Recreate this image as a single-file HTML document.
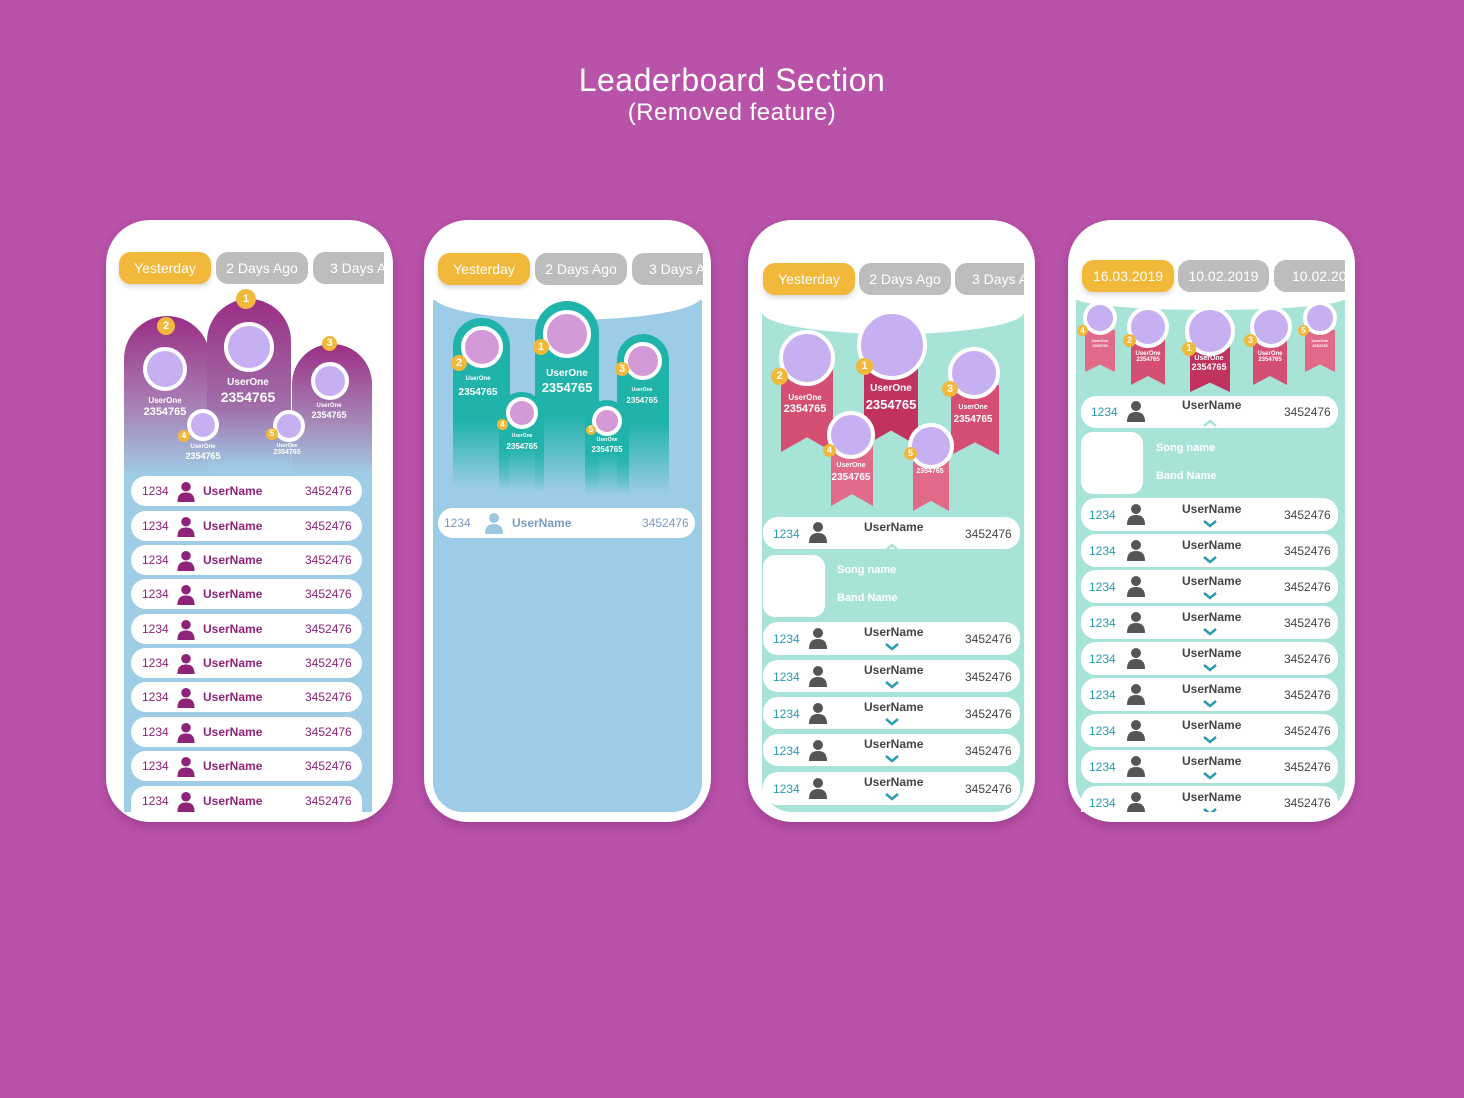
<!DOCTYPE html>
<html><head><meta charset="utf-8"><style>
*{margin:0;padding:0;box-sizing:border-box}
body{width:1464px;height:1098px;background:#B952A9;position:relative;overflow:hidden;font-family:"Liberation Sans Narrow","Liberation Sans",sans-serif}
.a{position:absolute}
.ph{position:absolute;background:#fff;border-radius:44px;width:287px;height:602px;top:220px;box-shadow:0 4px 10px rgba(80,0,70,.25)}
.tab{position:absolute;height:32px;border-radius:12px;color:#fff;font-size:14px;line-height:32px;text-align:center;overflow:hidden;white-space:nowrap}
.y{background:#F1B83A;box-shadow:0 3px 5px rgba(0,0,0,.15)}.g{background:#BDBDBD}
.row{position:absolute;background:#fff;border-radius:15px;height:30px;font-size:12px}
.row span{position:absolute;top:8px}
.c{position:absolute;border-radius:50%;background:#C7B0F2;border:4px solid #fff}
.cp{background:#D49AD8}
.b{position:absolute;border-radius:50%;background:#F1B83A;color:#fff;font-size:11px;font-weight:bold;text-align:center}
.t{position:absolute;color:#fff;text-align:center;font-weight:bold}
.rib{position:absolute;background:#D44F72;clip-path:polygon(0 0,100% 0,100% 100%,50% 82%,0 100%)}
</style></head><body>
<div class="a" style="left:0;width:1464px;top:62px;text-align:center;color:#fff;font-size:32px;letter-spacing:0.5px">Leaderboard Section</div>
<div class="a" style="left:0;width:1464px;top:99px;text-align:center;color:#fff;font-size:24px;letter-spacing:0.5px">(Removed feature)</div>

<!-- PHONE 1 -->
<div class="ph" style="left:106px"></div>
<div class="a" style="left:124px;top:420px;width:248px;height:392px;background:#9FCDE6"></div>
<div class="a" style="left:124px;top:316px;width:86px;height:160px;background:linear-gradient(#9b2d84,#a880b5 90px,#9fcde6);border-radius:43px 43px 0 0"></div>
<div class="a" style="left:207px;top:299px;width:84px;height:170px;background:linear-gradient(#9b2d84,#a070aa 110px,#9fcde6);border-radius:42px 42px 0 0"></div>
<div class="a" style="left:292px;top:344px;width:80px;height:130px;background:linear-gradient(#9b2d84,#a68ab9 80px,#9fcde6);border-radius:40px 40px 0 0"></div>
<div class="c" style="left:143px;top:347px;width:44px;height:44px"></div>
<div class="c" style="left:224px;top:322px;width:50px;height:50px"></div>
<div class="c" style="left:311px;top:362px;width:38px;height:38px"></div>
<div class="c" style="left:187px;top:409px;width:32px;height:32px"></div>
<div class="c" style="left:273px;top:410px;width:32px;height:32px"></div>
<div class="b" style="left:157px;top:317px;width:18px;height:18px;line-height:18px">2</div>
<div class="b" style="left:236px;top:289px;width:20px;height:20px;line-height:20px">1</div>
<div class="b" style="left:322px;top:336px;width:15px;height:15px;line-height:15px">3</div>
<div class="b" style="left:178px;top:430px;width:12px;height:12px;line-height:12px;font-size:8px">4</div>
<div class="b" style="left:266px;top:428px;width:12px;height:12px;line-height:12px;font-size:8px">5</div>
<div class="t" style="left:130px;top:396px;width:70px;font-size:8px">UserOne</div><div class="t" style="left:130px;top:406px;width:70px;font-size:11px">2354765</div>
<div class="t" style="left:212px;top:377px;width:72px;font-size:10px">UserOne</div><div class="t" style="left:212px;top:389px;width:72px;font-size:14px">2354765</div>
<div class="t" style="left:296px;top:403px;width:66px;font-size:6px">UserOne</div><div class="t" style="left:296px;top:410px;width:66px;font-size:9px">2354765</div>
<div class="t" style="left:170px;top:444px;width:66px;font-size:6px">UserOne</div><div class="t" style="left:170px;top:451px;width:66px;font-size:9px">2354765</div>
<div class="t" style="left:254px;top:443px;width:66px;font-size:5px">UserOne</div><div class="t" style="left:254px;top:449px;width:66px;font-size:7px">2354765</div>

<div class="tab y" style="left:119px;top:252px;width:92px">Yesterday</div>
<div class="tab g" style="left:216px;top:252px;width:92px">2 Days Ago</div>
<div class="tab g" style="left:313px;top:252px;width:71px;border-radius:12px 0 0 12px;text-align:left;padding-left:17px">3 Days Ago</div>

<div style="color:#8E2379">
<div class="row" style="left:131px;top:476px;width:231px"><span style="left:11px">1234</span><svg class="a" style="left:45px;top:5px" width="20" height="21" viewBox="0 0 20 22" fill="#8E2379"><circle cx="10" cy="6" r="5"/><path d="M1 22C1 14 5 12 10 12S19 14 19 22Z"/></svg><span style="left:72px;font-weight:bold">UserName</span><span style="left:174px">3452476</span></div>
<div class="row" style="left:131px;top:511px;width:231px"><span style="left:11px">1234</span><svg class="a" style="left:45px;top:5px" width="20" height="21" viewBox="0 0 20 22" fill="#8E2379"><circle cx="10" cy="6" r="5"/><path d="M1 22C1 14 5 12 10 12S19 14 19 22Z"/></svg><span style="left:72px;font-weight:bold">UserName</span><span style="left:174px">3452476</span></div>
<div class="row" style="left:131px;top:545px;width:231px"><span style="left:11px">1234</span><svg class="a" style="left:45px;top:5px" width="20" height="21" viewBox="0 0 20 22" fill="#8E2379"><circle cx="10" cy="6" r="5"/><path d="M1 22C1 14 5 12 10 12S19 14 19 22Z"/></svg><span style="left:72px;font-weight:bold">UserName</span><span style="left:174px">3452476</span></div>
<div class="row" style="left:131px;top:579px;width:231px"><span style="left:11px">1234</span><svg class="a" style="left:45px;top:5px" width="20" height="21" viewBox="0 0 20 22" fill="#8E2379"><circle cx="10" cy="6" r="5"/><path d="M1 22C1 14 5 12 10 12S19 14 19 22Z"/></svg><span style="left:72px;font-weight:bold">UserName</span><span style="left:174px">3452476</span></div>
<div class="row" style="left:131px;top:614px;width:231px"><span style="left:11px">1234</span><svg class="a" style="left:45px;top:5px" width="20" height="21" viewBox="0 0 20 22" fill="#8E2379"><circle cx="10" cy="6" r="5"/><path d="M1 22C1 14 5 12 10 12S19 14 19 22Z"/></svg><span style="left:72px;font-weight:bold">UserName</span><span style="left:174px">3452476</span></div>
<div class="row" style="left:131px;top:648px;width:231px"><span style="left:11px">1234</span><svg class="a" style="left:45px;top:5px" width="20" height="21" viewBox="0 0 20 22" fill="#8E2379"><circle cx="10" cy="6" r="5"/><path d="M1 22C1 14 5 12 10 12S19 14 19 22Z"/></svg><span style="left:72px;font-weight:bold">UserName</span><span style="left:174px">3452476</span></div>
<div class="row" style="left:131px;top:682px;width:231px"><span style="left:11px">1234</span><svg class="a" style="left:45px;top:5px" width="20" height="21" viewBox="0 0 20 22" fill="#8E2379"><circle cx="10" cy="6" r="5"/><path d="M1 22C1 14 5 12 10 12S19 14 19 22Z"/></svg><span style="left:72px;font-weight:bold">UserName</span><span style="left:174px">3452476</span></div>
<div class="row" style="left:131px;top:717px;width:231px"><span style="left:11px">1234</span><svg class="a" style="left:45px;top:5px" width="20" height="21" viewBox="0 0 20 22" fill="#8E2379"><circle cx="10" cy="6" r="5"/><path d="M1 22C1 14 5 12 10 12S19 14 19 22Z"/></svg><span style="left:72px;font-weight:bold">UserName</span><span style="left:174px">3452476</span></div>
<div class="row" style="left:131px;top:751px;width:231px"><span style="left:11px">1234</span><svg class="a" style="left:45px;top:5px" width="20" height="21" viewBox="0 0 20 22" fill="#8E2379"><circle cx="10" cy="6" r="5"/><path d="M1 22C1 14 5 12 10 12S19 14 19 22Z"/></svg><span style="left:72px;font-weight:bold">UserName</span><span style="left:174px">3452476</span></div>
<div class="row" style="left:131px;top:786px;width:231px;height:26px;border-radius:15px 15px 0 0"><span style="left:11px">1234</span><svg class="a" style="left:45px;top:5px" width="20" height="21" viewBox="0 0 20 22" fill="#8E2379"><circle cx="10" cy="6" r="5"/><path d="M1 22C1 14 5 12 10 12S19 14 19 22Z"/></svg><span style="left:72px;font-weight:bold">UserName</span><span style="left:174px">3452476</span></div>
</div>

<!-- PHONE 2 -->
<div class="ph" style="left:424px"></div>
<div class="a" style="left:433px;top:300px;width:269px;height:512px;background:#9CCCE6;border-radius:0 0 30px 30px"></div>
<div class="a" style="left:433px;top:284px;width:269px;height:36px;background:#fff;border-radius:0 0 50% 50%/0 0 24px 24px"></div>
<div class="a" style="left:453px;top:318px;width:57px;height:170px;border-radius:28px 28px 0 0;background:linear-gradient(#1FB3AA 60%,rgba(156,204,230,0))"></div>
<div class="a" style="left:535px;top:301px;width:64px;height:190px;border-radius:32px 32px 0 0;background:linear-gradient(#1FB3AA 60%,rgba(156,204,230,0))"></div>
<div class="a" style="left:617px;top:334px;width:52px;height:160px;border-radius:26px 26px 0 0;background:linear-gradient(#1FB3AA 55%,rgba(156,204,230,0))"></div>
<div class="a" style="left:499px;top:392px;width:45px;height:100px;border-radius:22px 22px 0 0;background:linear-gradient(#1FB3AA 55%,rgba(156,204,230,0))"></div>
<div class="a" style="left:585px;top:400px;width:44px;height:95px;border-radius:22px 22px 0 0;background:linear-gradient(#1FB3AA 55%,rgba(156,204,230,0))"></div>
<div class="c cp" style="left:461px;top:326px;width:42px;height:42px"></div>
<div class="c cp" style="left:543px;top:310px;width:48px;height:48px"></div>
<div class="c cp" style="left:624px;top:342px;width:38px;height:38px"></div>
<div class="c cp" style="left:506px;top:397px;width:32px;height:32px"></div>
<div class="c cp" style="left:592px;top:406px;width:30px;height:30px"></div>
<div class="b" style="left:451px;top:355px;width:16px;height:16px;line-height:16px">2</div>
<div class="b" style="left:533px;top:339px;width:16px;height:16px;line-height:16px">1</div>
<div class="b" style="left:615px;top:362px;width:14px;height:14px;line-height:14px">3</div>
<div class="b" style="left:497px;top:419px;width:11px;height:11px;line-height:11px;font-size:8px">4</div>
<div class="b" style="left:586px;top:425px;width:10px;height:10px;line-height:10px;font-size:8px">5</div>
<div class="t" style="left:446px;top:376px;width:64px;font-size:6px">UserOne</div><div class="t" style="left:446px;top:387px;width:64px;font-size:10px">2354765</div>
<div class="t" style="left:532px;top:368px;width:70px;font-size:10px">UserOne</div><div class="t" style="left:532px;top:380px;width:70px;font-size:13px">2354765</div>
<div class="t" style="left:610px;top:387px;width:64px;font-size:5px">UserOne</div><div class="t" style="left:610px;top:396px;width:64px;font-size:8px">2354765</div>
<div class="t" style="left:490px;top:433px;width:64px;font-size:5px">UserOne</div><div class="t" style="left:490px;top:442px;width:64px;font-size:8px">2354765</div>
<div class="t" style="left:575px;top:437px;width:64px;font-size:5px">UserOne</div><div class="t" style="left:575px;top:445px;width:64px;font-size:8px">2354765</div>
<div class="tab y" style="left:438px;top:253px;width:92px">Yesterday</div>
<div class="tab g" style="left:535px;top:253px;width:92px">2 Days Ago</div>
<div class="tab g" style="left:632px;top:253px;width:71px;border-radius:12px 0 0 12px;text-align:left;padding-left:17px">3 Days Ago</div>
<div class="row" style="left:438px;top:508px;width:257px;color:#7A9BC2"><span style="left:6px">1234</span><svg class="a" style="left:46px;top:4px" width="20" height="22" viewBox="0 0 20 22" fill="#9CC8E2"><circle cx="10" cy="6" r="5"/><path d="M1 22C1 14 5 12 10 12S19 14 19 22Z"/></svg><span style="left:74px;font-weight:bold">UserName</span><span style="left:204px">3452476</span></div>

<!-- PHONE 3 -->
<div class="ph" style="left:748px"></div>
<div class="a" style="left:762px;top:310px;width:262px;height:502px;background:#A8E3D7;border-radius:0 0 30px 30px"></div>
<div class="a" style="left:762px;top:296px;width:262px;height:38px;background:#fff;border-radius:0 0 50% 50%/0 0 22px 22px"></div>
<div class="rib" style="left:781px;top:370px;width:52px;height:82px"></div>
<div class="rib" style="left:864px;top:360px;width:54px;height:86px;background:#C2325F"></div>
<div class="rib" style="left:951px;top:385px;width:48px;height:70px"></div>
<div class="rib" style="left:831px;top:440px;width:42px;height:66px;background:#E06A88"></div>
<div class="rib" style="left:913px;top:455px;width:36px;height:56px;background:#E06A88"></div>
<div class="c" style="left:779px;top:330px;width:56px;height:56px"></div>
<div class="c" style="left:857px;top:310px;width:70px;height:70px"></div>
<div class="c" style="left:948px;top:347px;width:52px;height:52px"></div>
<div class="c" style="left:827px;top:411px;width:48px;height:48px"></div>
<div class="c" style="left:908px;top:423px;width:46px;height:46px"></div>
<div class="b" style="left:771px;top:368px;width:17px;height:17px;line-height:17px">2</div>
<div class="b" style="left:856px;top:358px;width:17px;height:17px;line-height:17px">1</div>
<div class="b" style="left:942px;top:381px;width:16px;height:16px;line-height:16px">3</div>
<div class="b" style="left:823px;top:444px;width:13px;height:13px;line-height:13px;font-size:9px">4</div>
<div class="b" style="left:904px;top:447px;width:13px;height:13px;line-height:13px;font-size:9px">5</div>
<div class="t" style="left:775px;top:393px;width:60px;font-size:8px">UserOne</div><div class="t" style="left:775px;top:403px;width:60px;font-size:11px">2354765</div>
<div class="t" style="left:856px;top:383px;width:70px;font-size:10px">UserOne</div><div class="t" style="left:856px;top:397px;width:70px;font-size:13px">2354765</div>
<div class="t" style="left:944px;top:404px;width:58px;font-size:7px">UserOne</div><div class="t" style="left:944px;top:414px;width:58px;font-size:10px">2354765</div>
<div class="t" style="left:822px;top:462px;width:58px;font-size:7px">UserOne</div><div class="t" style="left:822px;top:472px;width:58px;font-size:10px">2354765</div>
<div class="t" style="left:902px;top:468px;width:56px;font-size:7px">2354765</div>
<div class="tab y" style="left:763px;top:263px;width:92px">Yesterday</div>
<div class="tab g" style="left:859px;top:263px;width:92px">2 Days Ago</div>
<div class="tab g" style="left:955px;top:263px;width:69px;border-radius:12px 0 0 12px;text-align:left;padding-left:17px">3 Days Ago</div>

<div style="color:#444">
<div class="row" style="left:763px;top:517px;width:257px;height:32px"><span style="left:10px;top:10px;color:#2A9BB0">1234</span><svg class="a" style="left:45px;top:4px" width="20" height="22" viewBox="0 0 20 22" fill="#555"><circle cx="10" cy="6" r="5"/><path d="M1 22C1 14 5 12 10 12S19 14 19 22Z"/></svg><span style="left:101px;top:3px;font-weight:bold">UserName</span><span style="left:202px;top:10px">3452476</span></div>
<svg class="a" style="left:884px;top:542px" width="16" height="10"><path d="M2 8L8 3L14 8" stroke="#A8E3D7" stroke-width="2.5" fill="none"/></svg>
<div class="a" style="left:763px;top:555px;width:62px;height:62px;background:#fff;border-radius:12px"></div>
<div class="a" style="left:837px;top:564px;color:#fff;font-size:11px;font-weight:bold">Song name</div>
<div class="a" style="left:837px;top:592px;color:#fff;font-size:11px;font-weight:bold">Band Name</div>
<div class="row" style="left:763px;top:622px;width:257px;height:33px"><span style="left:10px;top:10px;color:#2A9BB0">1234</span><svg class="a" style="left:45px;top:5px" width="20" height="22" viewBox="0 0 20 22" fill="#555"><circle cx="10" cy="6" r="5"/><path d="M1 22C1 14 5 12 10 12S19 14 19 22Z"/></svg><span style="left:101px;top:3px;font-weight:bold">UserName</span><svg class="a" style="left:121px;top:20px" width="16" height="10"><path d="M2 2L8 7L14 2" stroke="#2A9BB0" stroke-width="2.5" fill="none"/></svg><span style="left:202px;top:10px">3452476</span></div>
<div class="row" style="left:763px;top:660px;width:257px;height:32px"><span style="left:10px;top:10px;color:#2A9BB0">1234</span><svg class="a" style="left:45px;top:5px" width="20" height="22" viewBox="0 0 20 22" fill="#555"><circle cx="10" cy="6" r="5"/><path d="M1 22C1 14 5 12 10 12S19 14 19 22Z"/></svg><span style="left:101px;top:3px;font-weight:bold">UserName</span><svg class="a" style="left:121px;top:20px" width="16" height="10"><path d="M2 2L8 7L14 2" stroke="#2A9BB0" stroke-width="2.5" fill="none"/></svg><span style="left:202px;top:10px">3452476</span></div>
<div class="row" style="left:763px;top:697px;width:257px;height:32px"><span style="left:10px;top:10px;color:#2A9BB0">1234</span><svg class="a" style="left:45px;top:5px" width="20" height="22" viewBox="0 0 20 22" fill="#555"><circle cx="10" cy="6" r="5"/><path d="M1 22C1 14 5 12 10 12S19 14 19 22Z"/></svg><span style="left:101px;top:3px;font-weight:bold">UserName</span><svg class="a" style="left:121px;top:20px" width="16" height="10"><path d="M2 2L8 7L14 2" stroke="#2A9BB0" stroke-width="2.5" fill="none"/></svg><span style="left:202px;top:10px">3452476</span></div>
<div class="row" style="left:763px;top:734px;width:257px;height:32px"><span style="left:10px;top:10px;color:#2A9BB0">1234</span><svg class="a" style="left:45px;top:5px" width="20" height="22" viewBox="0 0 20 22" fill="#555"><circle cx="10" cy="6" r="5"/><path d="M1 22C1 14 5 12 10 12S19 14 19 22Z"/></svg><span style="left:101px;top:3px;font-weight:bold">UserName</span><svg class="a" style="left:121px;top:20px" width="16" height="10"><path d="M2 2L8 7L14 2" stroke="#2A9BB0" stroke-width="2.5" fill="none"/></svg><span style="left:202px;top:10px">3452476</span></div>
<div class="row" style="left:763px;top:772px;width:257px;height:33px"><span style="left:10px;top:10px;color:#2A9BB0">1234</span><svg class="a" style="left:45px;top:5px" width="20" height="22" viewBox="0 0 20 22" fill="#555"><circle cx="10" cy="6" r="5"/><path d="M1 22C1 14 5 12 10 12S19 14 19 22Z"/></svg><span style="left:101px;top:3px;font-weight:bold">UserName</span><svg class="a" style="left:121px;top:20px" width="16" height="10"><path d="M2 2L8 7L14 2" stroke="#2A9BB0" stroke-width="2.5" fill="none"/></svg><span style="left:202px;top:10px">3452476</span></div>
</div>

<!-- PHONE 4 -->
<div class="ph" style="left:1068px"></div>
<div class="a" style="left:1076px;top:300px;width:269px;height:512px;background:#A8E3D7;border-radius:0 0 30px 30px"></div>
<div class="a" style="left:1076px;top:290px;width:269px;height:20px;background:#fff;border-radius:0 0 50% 50%/0 0 12px 12px"></div>
<div class="rib" style="left:1085px;top:330px;width:30px;height:42px;background:#E06A88"></div>
<div class="rib" style="left:1131px;top:335px;width:34px;height:50px"></div>
<div class="rib" style="left:1190px;top:340px;width:40px;height:52px;background:#C2325F"></div>
<div class="rib" style="left:1253px;top:335px;width:34px;height:50px"></div>
<div class="rib" style="left:1305px;top:330px;width:30px;height:42px;background:#E06A88"></div>
<div class="c" style="left:1083px;top:301px;width:34px;height:34px"></div>
<div class="c" style="left:1127px;top:306px;width:42px;height:42px"></div>
<div class="c" style="left:1185px;top:306px;width:50px;height:50px"></div>
<div class="c" style="left:1250px;top:306px;width:42px;height:42px"></div>
<div class="c" style="left:1303px;top:301px;width:34px;height:34px"></div>
<div class="b" style="left:1077px;top:325px;width:11px;height:11px;line-height:11px;font-size:8px">4</div>
<div class="b" style="left:1123px;top:334px;width:13px;height:13px;line-height:13px;font-size:9px">2</div>
<div class="b" style="left:1182px;top:342px;width:14px;height:14px;line-height:14px;font-size:10px">1</div>
<div class="b" style="left:1244px;top:334px;width:13px;height:13px;line-height:13px;font-size:9px">3</div>
<div class="b" style="left:1298px;top:325px;width:11px;height:11px;line-height:11px;font-size:8px">5</div>
<div class="t" style="left:1080px;top:338px;width:40px;font-size:4px">UserOne<br>2354765</div>
<div class="t" style="left:1128px;top:351px;width:40px;font-size:6px">UserOne<br>2354765</div>
<div class="t" style="left:1186px;top:355px;width:46px;font-size:7px">UserOne<br><span style="font-size:9px">2354765</span></div>
<div class="t" style="left:1250px;top:351px;width:40px;font-size:6px">UserOne<br>2354765</div>
<div class="t" style="left:1300px;top:338px;width:40px;font-size:4px">UserOne<br>2354765</div>
<div class="tab y" style="left:1082px;top:260px;width:92px">16.03.2019</div>
<div class="tab g" style="left:1178px;top:260px;width:91px">10.02.2019</div>
<div class="tab g" style="left:1274px;top:260px;width:71px;border-radius:12px 0 0 12px;text-align:left;padding-left:18px">10.02.2019</div>

<div style="color:#444">
<div class="row" style="left:1081px;top:396px;width:257px;height:32px"><span style="left:10px;top:9px;color:#2A9BB0">1234</span><svg class="a" style="left:45px;top:4px" width="20" height="22" viewBox="0 0 20 22" fill="#555"><circle cx="10" cy="6" r="5"/><path d="M1 22C1 14 5 12 10 12S19 14 19 22Z"/></svg><span style="left:101px;top:2px;font-weight:bold">UserName</span><span style="left:203px;top:9px">3452476</span></div>
<svg class="a" style="left:1202px;top:418px" width="16" height="10"><path d="M2 8L8 3L14 8" stroke="#A8E3D7" stroke-width="2.5" fill="none"/></svg>
<div class="a" style="left:1081px;top:432px;width:62px;height:62px;background:#fff;border-radius:12px"></div>
<div class="a" style="left:1156px;top:442px;color:#fff;font-size:11px;font-weight:bold">Song name</div>
<div class="a" style="left:1156px;top:470px;color:#fff;font-size:11px;font-weight:bold">Band Name</div>
<div class="row" style="left:1081px;top:498px;width:257px;height:33px"><span style="left:8px;top:10px;color:#2A9BB0">1234</span><svg class="a" style="left:45px;top:5px" width="20" height="22" viewBox="0 0 20 22" fill="#555"><circle cx="10" cy="6" r="5"/><path d="M1 22C1 14 5 12 10 12S19 14 19 22Z"/></svg><span style="left:101px;top:4px;font-weight:bold">UserName</span><svg class="a" style="left:121px;top:21px" width="16" height="10"><path d="M2 2L8 7L14 2" stroke="#2A9BB0" stroke-width="2.5" fill="none"/></svg><span style="left:203px;top:10px">3452476</span></div>
<div class="row" style="left:1081px;top:534px;width:257px;height:33px"><span style="left:8px;top:10px;color:#2A9BB0">1234</span><svg class="a" style="left:45px;top:5px" width="20" height="22" viewBox="0 0 20 22" fill="#555"><circle cx="10" cy="6" r="5"/><path d="M1 22C1 14 5 12 10 12S19 14 19 22Z"/></svg><span style="left:101px;top:4px;font-weight:bold">UserName</span><svg class="a" style="left:121px;top:21px" width="16" height="10"><path d="M2 2L8 7L14 2" stroke="#2A9BB0" stroke-width="2.5" fill="none"/></svg><span style="left:203px;top:10px">3452476</span></div>
<div class="row" style="left:1081px;top:570px;width:257px;height:33px"><span style="left:8px;top:10px;color:#2A9BB0">1234</span><svg class="a" style="left:45px;top:5px" width="20" height="22" viewBox="0 0 20 22" fill="#555"><circle cx="10" cy="6" r="5"/><path d="M1 22C1 14 5 12 10 12S19 14 19 22Z"/></svg><span style="left:101px;top:4px;font-weight:bold">UserName</span><svg class="a" style="left:121px;top:21px" width="16" height="10"><path d="M2 2L8 7L14 2" stroke="#2A9BB0" stroke-width="2.5" fill="none"/></svg><span style="left:203px;top:10px">3452476</span></div>
<div class="row" style="left:1081px;top:606px;width:257px;height:33px"><span style="left:8px;top:10px;color:#2A9BB0">1234</span><svg class="a" style="left:45px;top:5px" width="20" height="22" viewBox="0 0 20 22" fill="#555"><circle cx="10" cy="6" r="5"/><path d="M1 22C1 14 5 12 10 12S19 14 19 22Z"/></svg><span style="left:101px;top:4px;font-weight:bold">UserName</span><svg class="a" style="left:121px;top:21px" width="16" height="10"><path d="M2 2L8 7L14 2" stroke="#2A9BB0" stroke-width="2.5" fill="none"/></svg><span style="left:203px;top:10px">3452476</span></div>
<div class="row" style="left:1081px;top:642px;width:257px;height:33px"><span style="left:8px;top:10px;color:#2A9BB0">1234</span><svg class="a" style="left:45px;top:5px" width="20" height="22" viewBox="0 0 20 22" fill="#555"><circle cx="10" cy="6" r="5"/><path d="M1 22C1 14 5 12 10 12S19 14 19 22Z"/></svg><span style="left:101px;top:4px;font-weight:bold">UserName</span><svg class="a" style="left:121px;top:21px" width="16" height="10"><path d="M2 2L8 7L14 2" stroke="#2A9BB0" stroke-width="2.5" fill="none"/></svg><span style="left:203px;top:10px">3452476</span></div>
<div class="row" style="left:1081px;top:678px;width:257px;height:33px"><span style="left:8px;top:10px;color:#2A9BB0">1234</span><svg class="a" style="left:45px;top:5px" width="20" height="22" viewBox="0 0 20 22" fill="#555"><circle cx="10" cy="6" r="5"/><path d="M1 22C1 14 5 12 10 12S19 14 19 22Z"/></svg><span style="left:101px;top:4px;font-weight:bold">UserName</span><svg class="a" style="left:121px;top:21px" width="16" height="10"><path d="M2 2L8 7L14 2" stroke="#2A9BB0" stroke-width="2.5" fill="none"/></svg><span style="left:203px;top:10px">3452476</span></div>
<div class="row" style="left:1081px;top:714px;width:257px;height:33px"><span style="left:8px;top:10px;color:#2A9BB0">1234</span><svg class="a" style="left:45px;top:5px" width="20" height="22" viewBox="0 0 20 22" fill="#555"><circle cx="10" cy="6" r="5"/><path d="M1 22C1 14 5 12 10 12S19 14 19 22Z"/></svg><span style="left:101px;top:4px;font-weight:bold">UserName</span><svg class="a" style="left:121px;top:21px" width="16" height="10"><path d="M2 2L8 7L14 2" stroke="#2A9BB0" stroke-width="2.5" fill="none"/></svg><span style="left:203px;top:10px">3452476</span></div>
<div class="row" style="left:1081px;top:750px;width:257px;height:33px"><span style="left:8px;top:10px;color:#2A9BB0">1234</span><svg class="a" style="left:45px;top:5px" width="20" height="22" viewBox="0 0 20 22" fill="#555"><circle cx="10" cy="6" r="5"/><path d="M1 22C1 14 5 12 10 12S19 14 19 22Z"/></svg><span style="left:101px;top:4px;font-weight:bold">UserName</span><svg class="a" style="left:121px;top:21px" width="16" height="10"><path d="M2 2L8 7L14 2" stroke="#2A9BB0" stroke-width="2.5" fill="none"/></svg><span style="left:203px;top:10px">3452476</span></div>
<div class="row" style="left:1081px;top:786px;width:257px;height:26px;border-radius:15px 15px 0 0;overflow:hidden"><span style="left:8px;top:10px;color:#2A9BB0">1234</span><svg class="a" style="left:45px;top:5px" width="20" height="22" viewBox="0 0 20 22" fill="#555"><circle cx="10" cy="6" r="5"/><path d="M1 22C1 14 5 12 10 12S19 14 19 22Z"/></svg><span style="left:101px;top:4px;font-weight:bold">UserName</span><svg class="a" style="left:121px;top:21px" width="16" height="10"><path d="M2 2L8 7L14 2" stroke="#2A9BB0" stroke-width="2.5" fill="none"/></svg><span style="left:203px;top:10px">3452476</span></div>
</div>
</body></html>
